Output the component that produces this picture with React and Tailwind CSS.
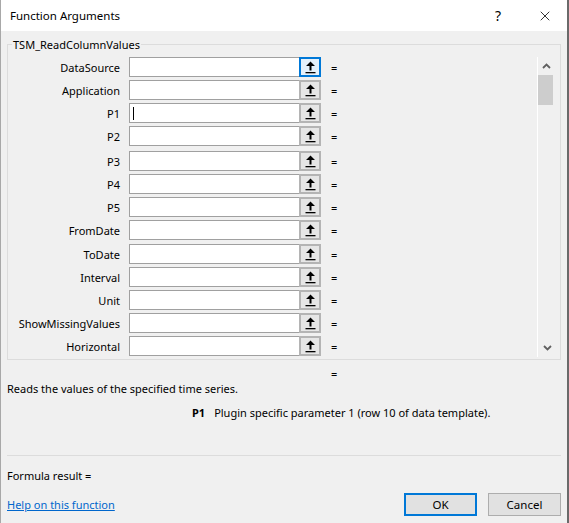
import { X } from "lucide-react";

const rows = [
  { label: "DataSource", focus: true },
  { label: "Application" },
  { label: "P1", cursor: true },
  { label: "P2" },
  { label: "P3", extra: "mt-[2px]" },
  { label: "P4" },
  { label: "P5" },
  { label: "FromDate" },
  { label: "ToDate", extra: "mt-[1px]" },
  { label: "Interval" },
  { label: "Unit" },
  { label: "ShowMissingValues" },
  { label: "Horizontal" },
];

function UpArrow() {
  return (
    <svg width="11" height="13" viewBox="0 0 11 13">
      <polygon points="5.5,0.5 10,5 6.5,5 6.5,9.5 4.5,9.5 4.5,5 1,5" fill="#000" />
      <rect x="0.5" y="11" width="10" height="1.3" fill="#000" />
    </svg>
  );
}

function ArgRow({ label, focus, cursor, extra }) {
  return (
    <div className={`flex h-[23px] items-start ${extra || ""}`}>
      <div className="flex h-[20px] w-[112px] items-center justify-end whitespace-nowrap">
        {label}
      </div>
      <div className="ml-[9px] flex h-[20px] w-[170px] items-center border border-r-0 border-[#a0a0a0] bg-white pl-[3px]">
        {cursor && <div className="h-[13px] w-px bg-black" />}
      </div>
      <div
        className={
          focus
            ? "flex h-[20px] w-[22px] items-center justify-center border-2 border-[#0078d7] bg-[#e5f1fb]"
            : "flex h-[20px] w-[22px] items-center justify-center border-2 border-[#b4b4b4] bg-[#e6e6e6]"
        }
      >
        <UpArrow />
      </div>
      <div className="ml-[10px] flex h-[20px] items-center">=</div>
    </div>
  );
}

function Scrollbar() {
  return (
    <div className="mr-[6px] mt-[12px] flex h-[300px] w-[17px] flex-col border-l border-white">
      <div className="flex h-[18px] items-center justify-center">
        <svg width="9" height="6" viewBox="0 0 9 6">
          <path d="M1 5 L4.5 1.5 L8 5" fill="none" stroke="#606060" strokeWidth="1.8" />
        </svg>
      </div>
      <div className="h-[30px] w-[15px] bg-[#cdcdcd]" />
      <div className="flex-1" />
      <div className="flex h-[18px] items-center justify-center pl-[3px]">
        <svg width="9" height="6" viewBox="0 0 9 6">
          <path d="M1 1 L4.5 4.5 L8 1" fill="none" stroke="#606060" strokeWidth="1.8" />
        </svg>
      </div>
    </div>
  );
}

export default function App() {
  return (
    <div className="flex h-[523px] w-[569px] flex-col border-l border-r-2 border-[#a8a8a8] border-r-[#6a6a6a] bg-[#f0f0f0] font-['Segoe_UI','Noto_Sans',sans-serif] text-[11px] leading-[15px] text-black">
      {/* Title bar */}
      <div className="flex h-[31px] shrink-0 items-center bg-white pl-[9px]">
        <span className="text-[11.5px]">Function Arguments</span>
        <span className="ml-auto text-[14px] leading-none">?</span>
        <X size={16} strokeWidth={1.2} className="ml-[36px] mr-[14px]" />
      </div>

      {/* Body */}
      <div className="flex flex-col px-[6px]">
        {/* Group box */}
        <div className="relative mt-[13px] flex h-[316px] border border-[#dcdcdc]">
          <span className="absolute left-[4px] top-[-8px] bg-[#f0f0f0] px-px">
            TSM_ReadColumnValues
          </span>
          <div className="flex flex-col pt-[12px]">
            {rows.map((r) => (
              <ArgRow key={r.label} {...r} />
            ))}
          </div>
          <div className="ml-auto">
            <Scrollbar />
          </div>
        </div>

        <div className="mt-[6px] pl-[324px]">=</div>
        <div>Reads the values of the specified time series.</div>
        <div className="mt-[9px] flex pl-[185px]">
          <span className="font-bold">P1</span>
          <span className="ml-[9px]">Plugin specific parameter 1 (row 10 of data template).</span>
        </div>

        <div className="mt-[35px] border-t border-[#dcdcdc]" />

        <div className="mt-[12px]">Formula result =</div>

        <div className="mt-[10px] flex items-center">
          <a href="#" className="text-[#0066cc] underline">
            Help on this function
          </a>
          <button className="ml-auto h-[23px] w-[73px] border-2 border-[#0078d7] bg-[#e1e1e1] text-[11.5px]">
            OK
          </button>
          <button className="ml-[11px] h-[23px] w-[73px] border border-[#adadad] bg-[#e1e1e1] text-[11.5px]">
            Cancel
          </button>
        </div>
      </div>
    </div>
  );
}
